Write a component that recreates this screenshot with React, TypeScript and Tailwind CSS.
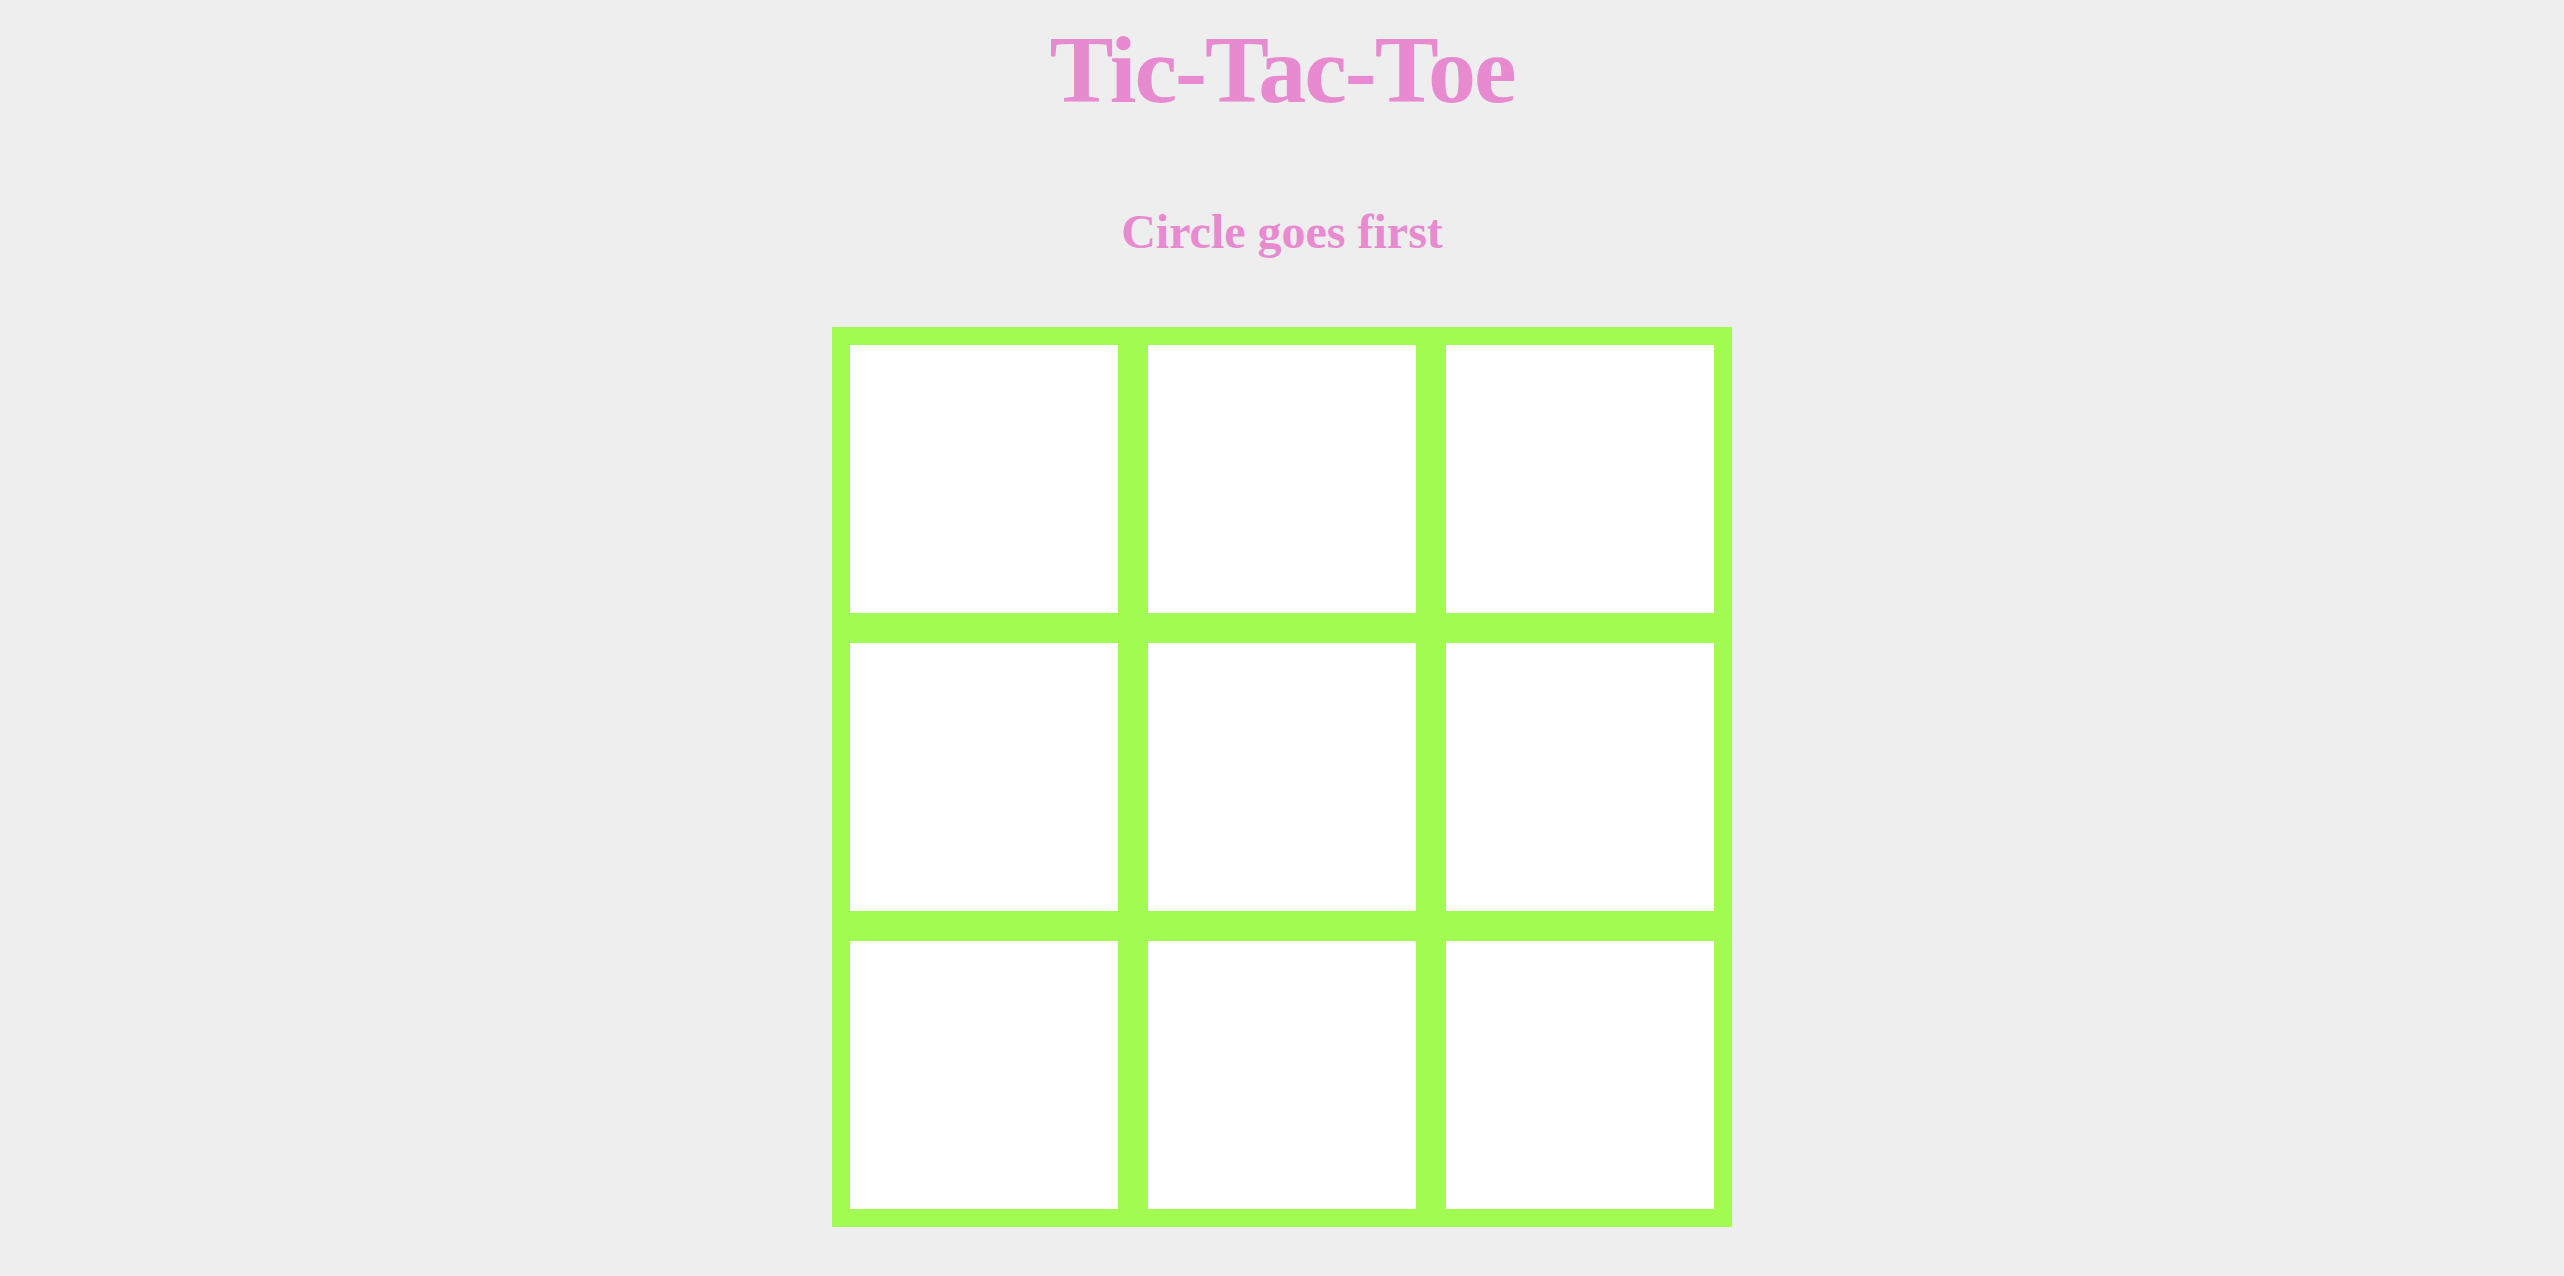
import React, { useState } from "react";

const App: React.FC = () => {
  const [cells, setCells] = useState<string[]>(Array(9).fill(""));
  const [turn, setTurn] = useState<"O" | "X">("O");

  const handleClick = (i: number) => {
    if (cells[i]) return;
    const next = [...cells];
    next[i] = turn;
    setCells(next);
    setTurn(turn === "O" ? "X" : "O");
  };

  return (
    <div
      className="min-h-screen bg-[#eeeeee] flex flex-col items-center pt-[22px] pb-[49px]"
      style={{ fontFamily: '"Liberation Serif", "DejaVu Serif", serif' }}
    >
      <h1 className="text-[96px] leading-none font-bold tracking-[-2px] text-[#e78ad0]">
        Tic-Tac-Toe
      </h1>
      <h2 className="mt-[90px] text-[48px] leading-none font-bold text-[#e78ad0]">
        Circle goes first
      </h2>

      {/* Board */}
      <div className="mt-[71px] bg-[#a2fb50] p-[18px] grid grid-cols-3 gap-[30px]">
        {cells.map((cell, i) => (
          <button
            key={i}
            onClick={() => handleClick(i)}
            className="w-[268px] h-[268px] bg-white flex items-center justify-center text-[160px] text-[#e78ad0] font-bold"
          >
            {cell}
          </button>
        ))}
      </div>
    </div>
  );
};

export default App;
